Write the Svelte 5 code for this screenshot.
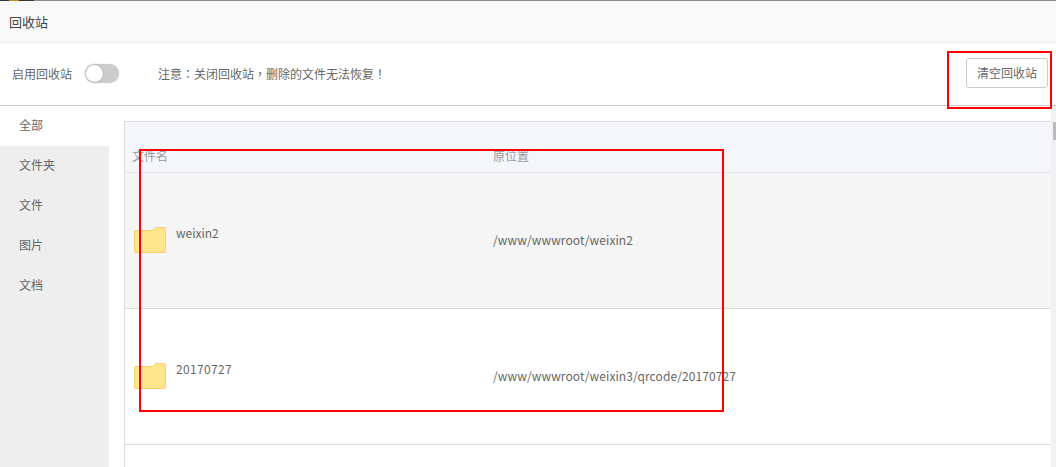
<script>
  const tabs = ['全部', '文件夹', '文件', '图片', '文档'];
  const rows = [
    { name: 'weixin2', path: '/www/wwwroot/weixin2' },
    { name: '20170727', path: '/www/wwwroot/weixin3/qrcode/20170727' }
  ];
</script>

<div class="page">
  <div class="topline"><span class="mark"></span></div>
  <header class="title">回收站</header>
  <section class="bar">
    <span class="label">启用回收站</span>
    <span class="switch"><span class="knob"></span></span>
    <span class="note">注意：关闭回收站，删除的文件无法恢复！</span>
    <button class="clear">清空回收站</button>
  </section>
  <div class="main">
    <nav class="side">
      {#each tabs as tab, i}
        <div class="tab" class:active={i === 0}>{tab}</div>
      {/each}
    </nav>
    <div class="content">
      <div class="table">
        <div class="head">
          <span class="c1">文件名</span>
          <span class="c2">原位置</span>
        </div>
        {#each rows as row, i}
          <div class="row" class:shade={i === 0}>
            <div class="c1 file">
              <svg class="folder" width="32" height="26" viewBox="0 0 32 26">
                <path d="M2 3.5H18.5L21 1.2Q21.6 .5 22.6 .5H30Q31.5 .5 31.5 2V24Q31.5 25.5 30 25.5H2Q.5 25.5 .5 24V5Q.5 3.5 2 3.5Z" fill="#ffe58c" stroke="#f7cf6b"/>
              </svg>
              <span class="name" class:digits={/^\d+$/.test(row.name)}>{row.name}</span>
            </div>
            <div class="c2 path">{row.path}</div>
          </div>
        {/each}
      </div>
    </div>
    <div class="scroll"><span class="thumb"></span></div>
  </div>
  <div class="mark-box box-a"></div>
  <div class="mark-box box-b"></div>
</div>

<style>
  :global(body) {
    margin: 0;
    background: #fff;
    overflow: hidden;
  }
  .page {
    position: relative;
    width: 1056px;
    height: 467px;
    overflow: hidden;
    font-family: "Liberation Sans", "Noto Sans CJK SC", sans-serif;
    font-size: 12px;
    color: #666;
  }
  .topline {
    height: 1px;
    background: linear-gradient(to right, #333 0 34px, #8a8a8a 34px);
    display: flex;
  }
  .mark {
    width: 10px;
    margin-left: 9px;
    background: #c98a1c;
  }
  .title {
    box-sizing: border-box;
    padding-left: 9px;
    line-height: 44px;
    font-size: 13px;
    color: #444;
    background: #f8f8f8;
    border-bottom: 1px solid #eee;
    height: 42px;
  }
  .bar {
    height: 63px;
    box-sizing: border-box;
    display: flex;
    align-items: center;
    border-bottom: 1px solid #ccc;
    padding: 0 8px 2px 12px;
  }
  .label {
    width: 73px;
  }
  .switch {
    width: 34px;
    height: 19px;
    border-radius: 10px;
    background: #ccc;
    position: relative;
    margin-right: 39px;
    box-shadow: 0 0 2px #ddd;
  }
  .knob {
    position: absolute;
    left: 1px;
    top: 1px;
    width: 17px;
    height: 17px;
    border-radius: 50%;
    background: #fff;
    box-shadow: 0 0 2px #999;
  }
  .note {
    flex: 1;
    font-family: "Noto Sans CJK TC", sans-serif;
  }
  .clear {
    width: 82px;
    height: 30px;
    padding: 0;
    border: 1px solid #ccc;
    border-radius: 3px;
    background: #fff;
    color: #666;
    font: inherit;
    margin-top: -1px;
  }
  .main {
    display: flex;
    height: 361px;
  }
  .side {
    width: 109px;
    background: #eee;
    flex: none;
  }
  .tab {
    height: 40px;
    line-height: 41px;
    padding-left: 19px;
  }
  .tab.active {
    background: #fff;
  }
  .content {
    flex: 1;
    padding: 15px 0 0 15px;
    min-width: 0;
  }
  .table {
    border-left: 1px solid #ddd;
    border-top: 1px solid #ddd;
    height: 100%;
  }
  .head {
    height: 51px;
    box-sizing: border-box;
    background: #f4f6fa;
    border-bottom: 1px solid #e2e5ea;
    display: flex;
    color: #999;
    padding-top: 28px;
    line-height: 14px;
  }
  .c1 {
    width: 352px;
    padding-left: 7px;
    box-sizing: border-box;
    flex: none;
    margin-right: 16px;
  }
  .row {
    height: 136px;
    box-sizing: border-box;
    display: flex;
    border-bottom: 1px solid #ddd;
  }
  .row.shade {
    background: #f5f5f5;
  }
  .file {
    display: flex;
    align-items: flex-start;
    padding-left: 9px;
    padding-top: 54px;
  }
  .folder {
    flex: none;
  }
  .name {
    margin-left: 10px;
    margin-top: -1px;
    line-height: 14px;
    font-family: "Noto Sans CJK SC", sans-serif;
  }
  .name.digits {
    letter-spacing: 0.35px;
  }
  .path {
    padding-top: 60px;
    line-height: 14px;
    font-family: "Noto Sans CJK SC", sans-serif;
    letter-spacing: 0.1px;
  }
  .scroll {
    width: 5px;
    flex: none;
    background: #f1f1f1;
    position: relative;
  }
  .thumb {
    position: absolute;
    top: 16px;
    left: 2px;
    width: 3px;
    height: 18px;
    background: #bbb;
  }
  .mark-box {
    position: absolute;
    box-sizing: border-box;
    border: 2px solid #f00;
    pointer-events: none;
  }
  .box-a {
    left: 947px;
    top: 51px;
    width: 105px;
    height: 58px;
  }
  .box-b {
    left: 139px;
    top: 149px;
    width: 585px;
    height: 263px;
  }
</style>
